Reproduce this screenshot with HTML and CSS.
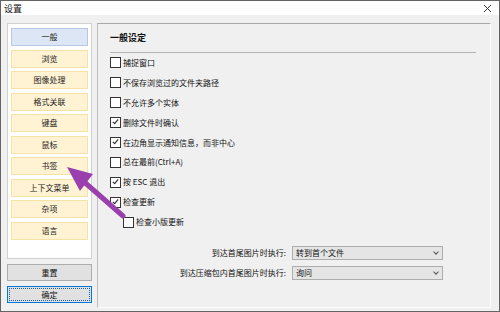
FILE: index.html
```html
<!DOCTYPE html>
<html lang="zh-CN">
<head>
    <meta charset="UTF-8">
    <title>设置</title>
    <link rel="stylesheet" href="styles.css">
</head>
<body>
    <div class="window">
        <div class="titlebar">
            <span class="title">设置</span>
            <svg class="close" width="9" height="9" viewBox="0 0 9 9">
                <path d="M1 1 L8 8 M8 1 L1 8" stroke="#333" stroke-width="1" fill="none"/>
            </svg>
        </div>
        <div class="main">
            <div class="sidebar">
                <div class="tabs">
                    <div class="tab active">一般</div>
                    <div class="tab">浏览</div>
                    <div class="tab">图像处理</div>
                    <div class="tab">格式关联</div>
                    <div class="tab">键盘</div>
                    <div class="tab">鼠标</div>
                    <div class="tab">书签</div>
                    <div class="tab">上下文菜单</div>
                    <div class="tab">杂项</div>
                    <div class="tab">语言</div>
                </div>
                <button class="btn">重置</button>
                <button class="btn focused">确定</button>
            </div>
            <div class="panel">
                <div class="heading">一般设定</div>
                <div class="sep"></div>
                <label class="row"><span class="box"></span>捕捉窗口</label>
                <label class="row"><span class="box"></span>不保存浏览过的文件夹路径</label>
                <label class="row"><span class="box"></span>不允许多个实体</label>
                <label class="row"><span class="box checked"></span>删除文件时确认</label>
                <label class="row"><span class="box checked"></span>在边角显示通知信息，而非中心</label>
                <label class="row"><span class="box"></span>总在最前(Ctrl+A)</label>
                <label class="row"><span class="box checked"></span>按 ESC 退出</label>
                <label class="row"><span class="box checked"></span>检查更新</label>
                <label class="row sub"><span class="box"></span>检查小版更新</label>
                <div class="form-rows">
                    <span class="label">到达首尾图片时执行:</span>
                    <div class="select">转到首个文件<span class="chev"></span></div>
                    <span class="label">到达压缩包内首尾图片时执行:</span>
                    <div class="select">询问<span class="chev"></span></div>
                </div>
            </div>
        </div>
        <svg class="arrow" width="500" height="312" viewBox="0 0 500 312">
            <line x1="123" y1="216" x2="82" y2="180" stroke="#9a3fae" stroke-width="5" stroke-linecap="round"/>
            <polygon points="67,167 93,174 80,191" fill="#9a3fae"/>
        </svg>
    </div>
</body>
</html>
```

FILE: styles.css
```css
body { margin: 0; font-family: "Noto Sans CJK SC", "Liberation Sans", sans-serif; font-size: 8px; color: #111; }
.window {
    position: relative;
    width: 500px;
    height: 312px;
    box-sizing: border-box;
    border: 1px solid #646464;
    background: #f0f0f0;
    overflow: hidden;
}
.titlebar {
    height: 14px;
    background: #fff;
    display: flex;
    align-items: center;
    justify-content: space-between;
    padding: 0 7px 0 3px;
    font-size: 9px;
}
.main { display: flex; gap: 5px; padding: 8px 8px 0 6px; }
.sidebar { width: 85px; display: flex; flex-direction: column; }
.tabs {
    height: 236px;
    box-sizing: border-box;
    background: #fff;
    border: 1px solid #d0d0d0;
    padding: 4px 3px 0 3px;
    display: flex;
    flex-direction: column;
    gap: 3.55px;
}
.tab {
    height: 18px;
    box-sizing: border-box;
    background: #fff3d3;
    border: 1px solid #f7e2a6;
    display: flex;
    align-items: center;
    justify-content: center;
    line-height: 1;
    color: #222;
}
.tab.active { background: #dde6f4; border-color: #b6c8e6; }
.btn {
    height: 17px;
    margin-top: 5px;
    background: #e1e1e1;
    border: 1px solid #adadad;
    font-family: inherit;
    font-size: 8px;
    padding: 0;
    color: #111;
}
.btn.focused { border: 1px solid #0078d7; outline: 1px dotted #1b5fb3; outline-offset: -3px; }
.panel {
    flex: 1;
    height: 285px;
    box-sizing: border-box;
    border-top: 1px solid #a8a8a8;
    border-left: 1px solid #bcbcbc;
    border-right: 1px solid #fdfdfd;
    border-bottom: 1px solid #fdfdfd;
    padding: 7px 0 0 12px;
}
.heading { font-size: 9px; font-weight: bold; height: 14px; line-height: 14px; }
.sep { height: 1px; background: #b5b5b5; margin: 7px 14px 0 0; }
.row { height: 19.9px; display: flex; align-items: center; gap: 2px; line-height: 1; }
.row.sub { padding-left: 13px; }
.box {
    width: 9px;
    height: 9px;
    border: 1px solid #333;
    background: #fff;
    position: relative;
}
.box.checked::after {
    content: "";
    position: absolute;
    left: 3px;
    top: 0px;
    width: 2px;
    height: 5px;
    border: solid #222;
    border-width: 0 1px 1px 0;
    transform: rotate(40deg);
}
.form-rows {
    display: grid;
    grid-template-columns: 176px 151px;
    column-gap: 6px;
    row-gap: 6px;
    margin-top: 14px;
    align-items: center;
}
.label { text-align: right; line-height: 1; }
.select {
    height: 14px;
    box-sizing: border-box;
    background: #e5e5e5;
    border: 1px solid #adadad;
    display: flex;
    align-items: center;
    justify-content: space-between;
    padding: 0 4px 0 3px;
    line-height: 1;
}
.chev {
    width: 3px;
    height: 3px;
    border: solid #555;
    border-width: 0 1px 1px 0;
    transform: rotate(45deg);
    margin-top: -2px;
}
.arrow { position: absolute; left: -1px; top: -1px; pointer-events: none; }
```
